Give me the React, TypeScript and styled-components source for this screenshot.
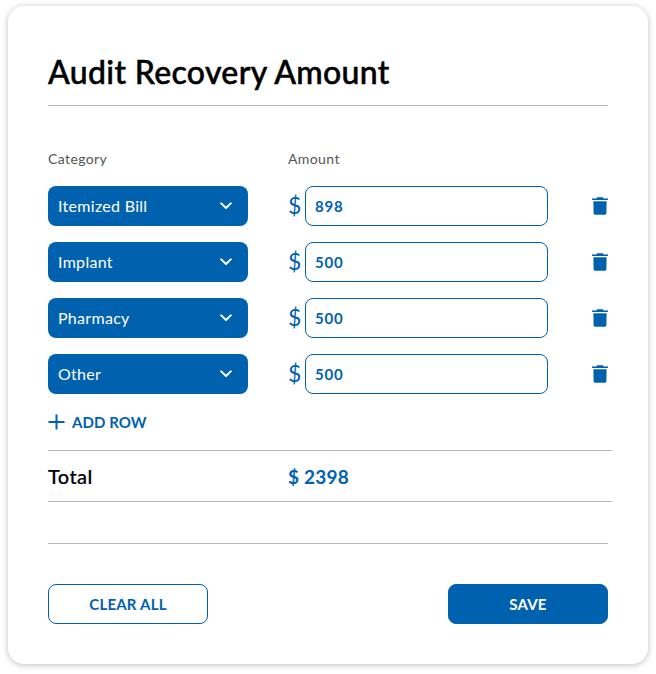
import React from "react";
import styled, { createGlobalStyle } from "styled-components";

const blue = "#0061af";
const FONT = `Lato, "Noto Sans", sans-serif`;

const GlobalStyle = createGlobalStyle`
    html, body {
        margin: 0;
        padding: 0;
        background: #ffffff;
    }
    * {
        box-sizing: border-box;
    }
`;

const Page = styled.div`
    width: 656px;
    height: 674px;
    padding: 6px 8px 10px;
    font-family: ${FONT};
`;

const Card = styled.div`
    width: 640px;
    height: 658px;
    padding: 47px 40px 40px;
    background: #fff;
    border-radius: 16px;
    box-shadow: 0 1px 6px rgba(0, 0, 0, 0.25);
    display: flex;
    flex-direction: column;
`;

const Title = styled.h1`
    margin: 0;
    height: 53px;
    font-size: 32px;
    line-height: 38px;
    font-weight: 500;
    letter-spacing: 0.33px;
    -webkit-text-stroke: 0.5px #000;
    color: #000;
    border-bottom: 1px solid #b5b7bd;
`;

const Headers = styled.div`
    display: flex;
    margin-top: 45px;
    height: 16px;
    margin-bottom: 19px;
`;

const HeaderLabel = styled.div`
    width: 240px;
    font-size: 14px;
    line-height: 16px;
    letter-spacing: 0.4px;
    color: #555;
`;

const Rows = styled.div`
    display: flex;
    flex-direction: column;
    gap: 16px;
`;

const Row = styled.div`
    display: flex;
    align-items: center;
    height: 40px;
`;

const Select = styled.div`
    width: 200px;
    height: 40px;
    margin-right: 40px;
    padding: 0 16px 0 10px;
    background: ${blue};
    border-radius: 8px;
    display: flex;
    align-items: center;
    justify-content: space-between;
    color: #fff;
    font-size: 16px;
    letter-spacing: 0.3px;
`;

const SelectText = styled.span`
    margin-bottom: 2px;
`;

const Dollar = styled.span`
    width: 17px;
    margin-top: -2px;
    font-size: 23px;
    color: ${blue};
`;

const AmountInput = styled.div`
    width: 243px;
    height: 40px;
    padding: 0 9px;
    border: 1px solid ${blue};
    border-radius: 8px;
    display: flex;
    align-items: center;
    color: ${blue};
    font-size: 15px;
    font-weight: 700;
    letter-spacing: 0.8px;
`;

const TrashButton = styled.div`
    margin-left: 44px;
    width: 16px;
    height: 18px;
    display: flex;
`;

const AddRow = styled.div`
    display: flex;
    align-items: center;
    gap: 7px;
    height: 20px;
    margin-top: 18px;
    color: ${blue};
    font-size: 15px;
    font-weight: 700;
    letter-spacing: 0.1px;
`;

const TotalRow = styled.div`
    display: flex;
    align-items: center;
    width: 564px;
    height: 52px;
    margin-top: 18px;
    border-top: 1px solid #b5b7bd;
    border-bottom: 1px solid #b5b7bd;
`;

const TotalLabel = styled.div`
    width: 240px;
    font-size: 20px;
    font-weight: 500;
    letter-spacing: 0.4px;
    -webkit-text-stroke: 0.2px #000;
    color: #000;
`;

const TotalValue = styled.div`
    font-size: 19px;
    font-weight: 700;
    color: ${blue};
    letter-spacing: 0.2px;
`;

const Divider = styled.div`
    height: 1px;
    margin-top: 41px;
    background: #b5b7bd;
`;

const Actions = styled.div`
    display: flex;
    justify-content: space-between;
    margin-top: 40px;
`;

const Button = styled.button<{ $primary?: boolean }>`
    width: 160px;
    height: 40px;
    padding: 0;
    border: 1px solid ${blue};
    border-radius: 8px;
    background: ${(props) => (props.$primary ? blue : "#fff")};
    color: ${(props) => (props.$primary ? "#fff" : blue)};
    font-family: ${FONT};
    font-size: 15px;
    font-weight: 700;
    letter-spacing: 0.2px;
`;

const Chevron = () => (
    <svg width="12" height="8" viewBox="0 0 12 8" fill="none">
        <path d="M1.2 1.4 6 6 10.8 1.4" stroke="#fff" strokeWidth="2" strokeLinecap="round" strokeLinejoin="round" />
    </svg>
);

const Trash = () => (
    <svg width="16" height="18" viewBox="0 0 16 18" fill={blue}>
        <path d="M5 0.3h6l0.5 1.2H15.6c.2 0 .4.2.4.4v1.1H0v-1.1c0-.2.2-.4.4-.4h4.1z" />
        <path d="M1.4 4.2h13.2l-.2 12.4c0 .7-.6 1.2-1.3 1.2H2.9c-.7 0-1.3-.5-1.3-1.2z" />
    </svg>
);

const Plus = () => (
    <svg width="17" height="16" viewBox="0 0 17 16" fill="none">
        <path d="M8.5 0.5v15M0.5 8h16" stroke={blue} strokeWidth="2" />
    </svg>
);

const rows = [
    { category: "Itemized Bill", amount: "898" },
    { category: "Implant", amount: "500" },
    { category: "Pharmacy", amount: "500" },
    { category: "Other", amount: "500" },
];

export default function App() {
    return (
        <Page>
            <GlobalStyle />
            <Card>
                <Title>Audit Recovery Amount</Title>
                <Headers>
                    <HeaderLabel>Category</HeaderLabel>
                    <HeaderLabel>Amount</HeaderLabel>
                </Headers>
                <Rows>
                    {rows.map((row) => (
                        <Row key={row.category}>
                            <Select>
                                <SelectText>{row.category}</SelectText>
                                <Chevron />
                            </Select>
                            <Dollar>$</Dollar>
                            <AmountInput>{row.amount}</AmountInput>
                            <TrashButton>
                                <Trash />
                            </TrashButton>
                        </Row>
                    ))}
                </Rows>
                <AddRow>
                    <Plus />
                    ADD ROW
                </AddRow>
                <TotalRow>
                    <TotalLabel>Total</TotalLabel>
                    <TotalValue>$ 2398</TotalValue>
                </TotalRow>
                <Divider />
                <Actions>
                    <Button>CLEAR ALL</Button>
                    <Button $primary>SAVE</Button>
                </Actions>
            </Card>
        </Page>
    );
}
